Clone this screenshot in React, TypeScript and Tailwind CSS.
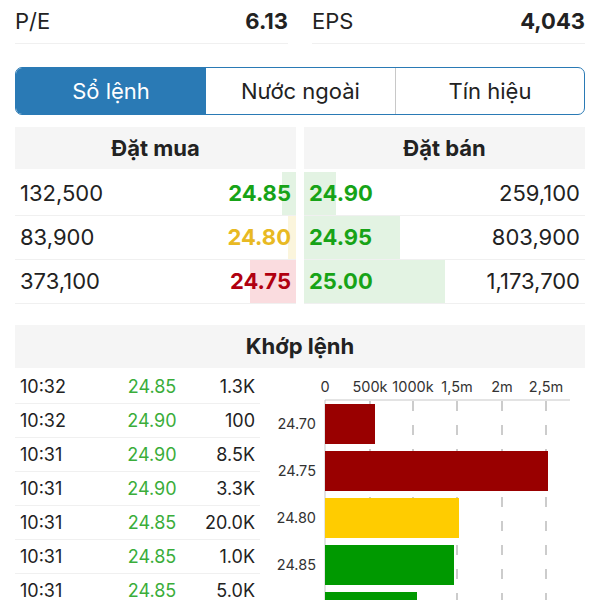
import React from 'react';

const buys = [
  { vol: '132,500', price: '24.85', color: 'text-[#17a317]', bar: 'bg-[#e3f3e3]', w: 14 },
  { vol: '83,900', price: '24.80', color: 'text-[#e8b923]', bar: 'bg-[#fbf5dc]', w: 8 },
  { vol: '373,100', price: '24.75', color: 'text-[#b00010]', bar: 'bg-[#fadcdf]', w: 46 },
];

const sells = [
  { vol: '259,100', price: '24.90', w: 32 },
  { vol: '803,900', price: '24.95', w: 96 },
  { vol: '1,173,700', price: '25.00', w: 141 },
];

const trades = [
  ['10:32', '24.85', '1.3K'],
  ['10:32', '24.90', '100'],
  ['10:31', '24.90', '8.5K'],
  ['10:31', '24.90', '3.3K'],
  ['10:31', '24.85', '20.0K'],
  ['10:31', '24.85', '1.0K'],
  ['10:31', '24.85', '5.0K'],
];

const ticks = [
  { x: 65, label: '0' },
  { x: 110, label: '500k' },
  { x: 153, label: '1000k' },
  { x: 197, label: '1,5m' },
  { x: 242, label: '2m' },
  { x: 286, label: '2,5m' },
];

// last bar is only half visible in the shot, so no label for it
const bars = [
  { label: '24.70', w: 50, fill: '#990000' },
  { label: '24.75', w: 223, fill: '#990000' },
  { label: '24.80', w: 134, fill: '#ffcc00' },
  { label: '24.85', w: 129, fill: '#009900' },
  { label: '', w: 92, fill: '#009900' },
];

const VolumeChart = () => (
  <svg width={325} height={230} className="block" fontFamily="Inter, 'Liberation Sans', sans-serif">
    {ticks.map((t) => (
      <text key={t.label} x={t.x} y={22} fontSize={14.5} textAnchor="middle" fill="#333">
        {t.label}
      </text>
    ))}
    <line x1={65} y1={30} x2={310} y2={30} stroke="#c8c8c8" strokeWidth={1} />
    <line x1={65} y1={30} x2={65} y2={230} stroke="#c8c8c8" strokeWidth={1} />
    {ticks.slice(1).map((t) => (
      <line key={t.x} x1={t.x} y1={31} x2={t.x} y2={230} stroke="#999" strokeWidth={1} strokeDasharray="10 14" />
    ))}
    {bars.map((b, i) => (
      <g key={i}>
        <rect x={65} y={34 + i * 47} width={b.w} height={40} fill={b.fill} />
        {b.label && (
          <text x={56} y={34 + i * 47 + 25} fontSize={14.5} textAnchor="end" fill="#333">
            {b.label}
          </text>
        )}
      </g>
    ))}
  </svg>
);

export default function App() {
  return (
    <div className="w-[600px] h-[600px] overflow-hidden bg-white px-[15px] text-[#222] font-['Inter','Liberation_Sans',sans-serif]">
      <div className="grid grid-cols-2 gap-[24px]">
        <div className="h-[44px] flex items-center justify-between border-b border-[#f0f0f0] text-[22px]">
          <span>P/E</span>
          <span className="font-bold">6.13</span>
        </div>
        <div className="h-[44px] flex items-center justify-between border-b border-[#f0f0f0] text-[22px]">
          <span>EPS</span>
          <span className="font-bold">4,043</span>
        </div>
      </div>

      <div className="mt-[23px] h-[48px] flex rounded-[7px] border border-[#2a7ab5] overflow-hidden text-[22px]">
        <div className="w-[190px] flex items-center justify-center bg-[#2a7ab5] text-white">Sổ lệnh</div>
        <div className="w-[190px] flex items-center justify-center border-r border-[#c8c8c8]">Nước ngoài</div>
        <div className="flex-1 flex items-center justify-center">Tín hiệu</div>
      </div>

      <div className="mt-[12px] grid grid-cols-2 gap-[8px]">
        <div>
          <div className="h-[42px] flex items-center justify-center bg-[#f5f5f5] font-bold text-[22px]">Đặt mua</div>
          <div className="mt-[3px]">
            {buys.map((r) => (
              <div key={r.vol} className="h-[44px] flex items-center justify-between border-b border-[#f0f0f0] text-[22px]">
                <span className="pl-[5px]">{r.vol}</span>
                <div className="relative h-full flex items-center pr-[5px]">
                  <div className={`absolute right-0 top-0 h-full ${r.bar}`} style={{ width: r.w }} />
                  <span className={`relative font-bold ${r.color}`}>{r.price}</span>
                </div>
              </div>
            ))}
          </div>
        </div>
        <div>
          <div className="h-[42px] flex items-center justify-center bg-[#f5f5f5] font-bold text-[22px]">Đặt bán</div>
          <div className="mt-[3px]">
            {sells.map((r) => (
              <div key={r.vol} className="h-[44px] flex items-center justify-between border-b border-[#f0f0f0] text-[22px]">
                <div className="relative h-full flex items-center pl-[5px]">
                  <div className="absolute left-0 top-0 h-full bg-[#e3f3e3]" style={{ width: r.w }} />
                  <span className="relative font-bold text-[#17a317]">{r.price}</span>
                </div>
                <span className="pr-[5px]">{r.vol}</span>
              </div>
            ))}
          </div>
        </div>
      </div>

      <div className="mt-[21px] h-[43px] flex items-center justify-center bg-[#f5f5f5] font-bold text-[22px]">Khớp lệnh</div>
      <div className="mt-[2px] flex">
        <div className="w-[245px] shrink-0">
          {trades.map((t, i) => (
            <div key={i} className="h-[34px] flex items-center border-b border-[#f0f0f0] text-[18px]">
              <span className="w-[100px] pl-[5px]">{t[0]}</span>
              <span className="w-[74px] text-center text-[#3aad3a]">{t[1]}</span>
              <span className="flex-1 text-right pr-[5px]">{t[2]}</span>
            </div>
          ))}
        </div>
        <VolumeChart />
      </div>
    </div>
  );
}
